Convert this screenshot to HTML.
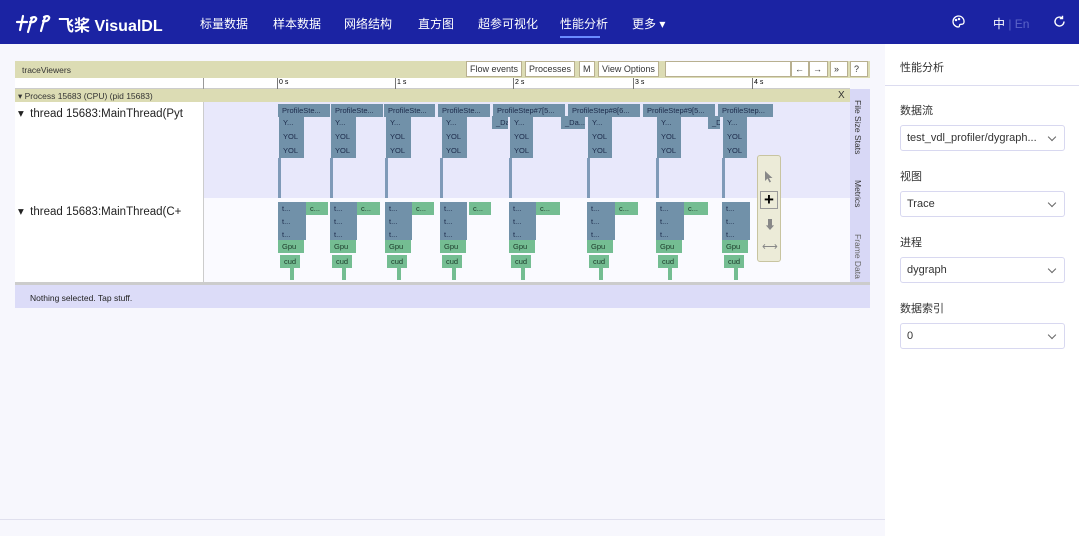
<!DOCTYPE html>
<html><head><meta charset="utf-8"><style>
*{margin:0;padding:0;box-sizing:border-box}
body{width:1079px;height:536px;overflow:hidden;background:#f7f7fd;font-family:"Liberation Sans","Noto Sans CJK SC",sans-serif;position:relative}
.a{position:absolute}
.hd{left:0;top:0;width:1079px;height:44px;background:#1b23a3}
.nav{color:#fff;font-size:12px;top:15px}
.b{position:absolute;background:#7191a9;color:#1c2a4a;font-size:7.5px;line-height:13px;padding-left:4px;overflow:hidden;white-space:nowrap}
.g{position:absolute;background:#74bd92;color:#1c3a2a;font-size:7.5px;line-height:13px;padding-left:4px;overflow:hidden;white-space:nowrap}
.s{position:absolute;background:#7f9ab8;width:3px}
.btn{position:absolute;top:61px;height:16px;background:#fff;border:1px solid #b8b090;font-size:9px;line-height:14px;padding:0 3px;color:#333}
.sel{position:absolute;left:900px;width:165px;height:26px;border:1px solid #d8d8f0;border-radius:3px;background:#fff;font-size:11px;line-height:24px;padding-left:6px;color:#333}
.sel:after{content:"";position:absolute;right:9px;top:8px;width:5px;height:5px;border-right:1px solid #666;border-bottom:1px solid #666;transform:rotate(45deg)}
.lb{position:absolute;left:900px;font-size:11px;color:#333}
</style></head><body>
<div class="a hd"></div>
<svg class="a" style="left:15px;top:10px" width="40" height="24" viewBox="0 0 40 24" fill="none" stroke="#fff" stroke-width="2.2" stroke-linecap="round">
<path d="M2 12H12M8 6L5 20"/><path d="M16 8C20 6 23 8 20 11C18 13 15 12 15 12M17 8L13 22"/><path d="M29 7C33 5 36 7 33 10C31 12 28 11 28 11M30 7L26 21"/></svg>
<div class="a" style="left:58px;top:12px;color:#fff;font-size:16px;font-weight:bold">飞桨 VisualDL</div>
<div class="a nav" style="left:200px">标量数据</div>
<div class="a nav" style="left:273px">样本数据</div>
<div class="a nav" style="left:344px">网络结构</div>
<div class="a nav" style="left:418px">直方图</div>
<div class="a nav" style="left:478px">超参可视化</div>
<div class="a nav" style="left:560px">性能分析</div>
<div class="a" style="left:560px;top:36px;width:40px;height:2px;background:#6a8cff"></div>
<div class="a nav" style="left:632px">更多 ▾</div>
<svg class="a" style="left:952px;top:15px" width="13" height="13" viewBox="0 0 13 13" fill="none" stroke="#fff" stroke-width="1.3"><path d="M6.5 1A5.5 5.5 0 1 0 6.5 12C8 12 7 10 8 9.5C9 9 12 10 12 7A5.5 5.5 0 0 0 6.5 1Z"/><circle cx="4" cy="5" r=".6"/><circle cx="7" cy="4" r=".6"/></svg>
<div class="a nav" style="left:993px">中 <span style="color:#5c64c8">| En</span></div>
<svg class="a" style="left:1053px;top:15px" width="13" height="13" viewBox="0 0 13 13" fill="none" stroke="#fff" stroke-width="1.4"><path d="M11 6.5A4.5 4.5 0 1 1 9 2.8"/><path d="M9.5 0.8V3.5H6.8"/></svg>

<!-- right panel -->
<div class="a" style="left:885px;top:44px;width:194px;height:492px;background:#fff"></div>
<div class="a" style="left:900px;top:59px;font-size:11px;color:#333">性能分析</div>
<div class="a" style="left:885px;top:85px;width:194px;height:1px;background:#dcdcf0"></div>
<div class="lb" style="top:102px">数据流</div><div class="sel" style="top:125px">test_vdl_profiler/dygraph...</div>
<div class="lb" style="top:168px">视图</div><div class="sel" style="top:191px">Trace</div>
<div class="lb" style="top:234px">进程</div><div class="sel" style="top:257px">dygraph</div>
<div class="lb" style="top:300px">数据索引</div><div class="sel" style="top:323px">0</div>
<div class="a" style="left:0;top:519px;width:885px;height:1px;background:#e0e0ee"></div>

<!-- trace viewer -->
<div class="a" style="left:15px;top:61px;width:855px;height:17px;background:#dcdcb4"></div>
<div class="a" style="left:22px;top:65px;font-size:8.5px;color:#333">traceViewers</div>
<div class="btn" style="left:466px">Flow events</div>
<div class="btn" style="left:525px">Processes</div>
<div class="btn" style="left:579px">M</div>
<div class="btn" style="left:598px">View Options</div>
<div class="btn" style="left:665px;width:126px"></div>
<div class="btn" style="left:791px;width:18px">←</div>
<div class="btn" style="left:809px;width:19px">→</div>
<div class="btn" style="left:830px;width:18px">»</div>
<div class="btn" style="left:850px;width:18px">?</div>
<div class="a" style="left:15px;top:78px;width:835px;height:11px;background:#fff;border-bottom:1px solid #ccc"></div>
<div class="a" style="left:203px;top:78px;width:1px;height:11px;background:#999"></div>
<div class="a" style="left:277px;top:78px;width:1px;height:11px;background:#777"></div><div class="a" style="left:279px;top:79px;font-size:7px">0 s</div>
<div class="a" style="left:395px;top:78px;width:1px;height:11px;background:#777"></div><div class="a" style="left:397px;top:79px;font-size:7px">1 s</div>
<div class="a" style="left:513px;top:78px;width:1px;height:11px;background:#777"></div><div class="a" style="left:515px;top:79px;font-size:7px">2 s</div>
<div class="a" style="left:633px;top:78px;width:1px;height:11px;background:#777"></div><div class="a" style="left:635px;top:79px;font-size:7px">3 s</div>
<div class="a" style="left:752px;top:78px;width:1px;height:11px;background:#777"></div><div class="a" style="left:754px;top:79px;font-size:7px">4 s</div>
<div class="a" style="left:15px;top:89px;width:835px;height:13px;background:#dcdcb4"></div>
<div class="a" style="left:18px;top:91px;font-size:8.5px;color:#333">▾ Process 15683 (CPU) (pid 15683)</div>
<div class="a" style="left:838px;top:90px;font-size:10px;color:#333">X</div>
<div class="a" style="left:15px;top:102px;width:188px;height:182px;background:#fff"></div>
<div class="a" style="left:203px;top:102px;width:647px;height:96px;background:#e8e8fb"></div>
<div class="a" style="left:203px;top:198px;width:647px;height:86px;background:#fafaff"></div>
<div class="a" style="left:203px;top:102px;width:1px;height:182px;background:#ccc"></div>
<div class="a" style="left:18px;top:106px;font-size:11.5px;color:#222">▾&nbsp; thread 15683:MainThread(Pyt</div>
<div class="a" style="left:18px;top:204px;font-size:11.5px;color:#222">▾&nbsp; thread 15683:MainThread(C+</div>
<div class="a" style="left:850px;top:89px;width:20px;height:195px;background:#d8d8f6"></div>
<div class="a" style="left:853px;top:100px;font-size:8.5px;color:#333;writing-mode:vertical-rl">File Size Stats</div>
<div class="a" style="left:853px;top:180px;font-size:8.5px;color:#333;writing-mode:vertical-rl">Metrics</div>
<div class="a" style="left:853px;top:234px;font-size:8.5px;color:#666;writing-mode:vertical-rl">Frame Data</div>

<!-- stems -->
<div class="s" style="left:278px;top:158px;height:40px"></div>
<div class="s" style="left:330px;top:158px;height:40px"></div>
<div class="s" style="left:385px;top:158px;height:40px"></div>
<div class="s" style="left:440px;top:158px;height:40px"></div>
<div class="s" style="left:509px;top:158px;height:40px"></div>
<div class="s" style="left:587px;top:158px;height:40px"></div>
<div class="s" style="left:656px;top:158px;height:40px"></div>
<div class="s" style="left:722px;top:158px;height:40px"></div>

<!-- top thread -->
<div class="b" style="left:278px;top:104px;width:52px">ProfileSte...</div>
<div class="b" style="left:331px;top:104px;width:52px">ProfileSte...</div>
<div class="b" style="left:384px;top:104px;width:51px">ProfileSte...</div>
<div class="b" style="left:438px;top:104px;width:52px">ProfileSte...</div>
<div class="b" style="left:493px;top:104px;width:72px">ProfileStep#7[5...</div>
<div class="b" style="left:568px;top:104px;width:72px">ProfileStep#8[6...</div>
<div class="b" style="left:643px;top:104px;width:72px">ProfileStep#9[5...</div>
<div class="b" style="left:718px;top:104px;width:55px">ProfileStep...</div>
<div class="b" style="left:279px;top:116px;width:25px;height:42px;line-height:14px">Y...<br>YOL<br>YOL</div>
<div class="b" style="left:331px;top:116px;width:25px;height:42px;line-height:14px">Y...<br>YOL<br>YOL</div>
<div class="b" style="left:386px;top:116px;width:25px;height:42px;line-height:14px">Y...<br>YOL<br>YOL</div>
<div class="b" style="left:442px;top:116px;width:25px;height:42px;line-height:14px">Y...<br>YOL<br>YOL</div>
<div class="b" style="left:492px;top:116px;width:16px">_Da</div>
<div class="b" style="left:510px;top:116px;width:23px;height:42px;line-height:14px">Y...<br>YOL<br>YOL</div>
<div class="b" style="left:561px;top:116px;width:24px">_Da...</div>
<div class="b" style="left:588px;top:116px;width:24px;height:42px;line-height:14px">Y...<br>YOL<br>YOL</div>
<div class="b" style="left:657px;top:116px;width:24px;height:42px;line-height:14px">Y...<br>YOL<br>YOL</div>
<div class="b" style="left:708px;top:116px;width:12px">_D</div>
<div class="b" style="left:723px;top:116px;width:24px;height:42px;line-height:14px">Y...<br>YOL<br>YOL</div>

<!-- bottom thread -->
<div class="b" style="left:278px;top:202px;width:28px;height:38px;line-height:13px">t...<br>t...<br>t...</div><div class="g" style="left:278px;top:240px;width:26px">Gpu</div><div class="g" style="left:280px;top:255px;width:20px">cud</div><div class="g" style="left:306px;top:202px;width:22px">c...</div>
<div class="b" style="left:330px;top:202px;width:27px;height:38px;line-height:13px">t...<br>t...<br>t...</div><div class="g" style="left:330px;top:240px;width:26px">Gpu</div><div class="g" style="left:332px;top:255px;width:20px">cud</div><div class="g" style="left:357px;top:202px;width:23px">c...</div>
<div class="b" style="left:385px;top:202px;width:27px;height:38px;line-height:13px">t...<br>t...<br>t...</div><div class="g" style="left:385px;top:240px;width:26px">Gpu</div><div class="g" style="left:387px;top:255px;width:20px">cud</div><div class="g" style="left:412px;top:202px;width:22px">c...</div>
<div class="b" style="left:440px;top:202px;width:27px;height:38px;line-height:13px">t...<br>t...<br>t...</div><div class="g" style="left:440px;top:240px;width:26px">Gpu</div><div class="g" style="left:442px;top:255px;width:20px">cud</div><div class="g" style="left:469px;top:202px;width:22px">c...</div>
<div class="b" style="left:509px;top:202px;width:27px;height:38px;line-height:13px">t...<br>t...<br>t...</div><div class="g" style="left:509px;top:240px;width:26px">Gpu</div><div class="g" style="left:511px;top:255px;width:20px">cud</div><div class="g" style="left:536px;top:202px;width:24px">c...</div>
<div class="b" style="left:587px;top:202px;width:28px;height:38px;line-height:13px">t...<br>t...<br>t...</div><div class="g" style="left:587px;top:240px;width:26px">Gpu</div><div class="g" style="left:589px;top:255px;width:20px">cud</div><div class="g" style="left:615px;top:202px;width:23px">c...</div>
<div class="b" style="left:656px;top:202px;width:28px;height:38px;line-height:13px">t...<br>t...<br>t...</div><div class="g" style="left:656px;top:240px;width:26px">Gpu</div><div class="g" style="left:658px;top:255px;width:20px">cud</div><div class="g" style="left:684px;top:202px;width:24px">c...</div>
<div class="b" style="left:722px;top:202px;width:28px;height:38px;line-height:13px">t...<br>t...<br>t...</div><div class="g" style="left:722px;top:240px;width:26px">Gpu</div><div class="g" style="left:724px;top:255px;width:20px">cud</div>
<div class="g" style="left:290px;top:268px;width:4px;height:12px;padding:0"></div>
<div class="g" style="left:342px;top:268px;width:4px;height:12px;padding:0"></div>
<div class="g" style="left:397px;top:268px;width:4px;height:12px;padding:0"></div>
<div class="g" style="left:452px;top:268px;width:4px;height:12px;padding:0"></div>
<div class="g" style="left:521px;top:268px;width:4px;height:12px;padding:0"></div>
<div class="g" style="left:599px;top:268px;width:4px;height:12px;padding:0"></div>
<div class="g" style="left:668px;top:268px;width:4px;height:12px;padding:0"></div>
<div class="g" style="left:734px;top:268px;width:4px;height:12px;padding:0"></div>

<!-- tool palette -->
<div class="a" style="left:757px;top:155px;width:24px;height:107px;background:#ecebd8;border:1px solid #c8c4a0;border-radius:3px"></div>
<svg class="a" style="left:764px;top:170px" width="10" height="13" viewBox="0 0 10 13"><path d="M1 1V11L3.5 8.5L5.5 12.5L7 11.8L5 8H8.5Z" fill="#888"/></svg>
<div class="a" style="left:760px;top:191px;width:18px;height:18px;border:1px solid #999;font-size:17px;line-height:15px;text-align:center;font-weight:bold">+</div>
<div class="a" style="left:764px;top:216px;font-size:12px;color:#888">⬇</div>
<div class="a" style="left:762px;top:240px;font-size:11px;color:#888">⟷</div>

<!-- status -->
<div class="a" style="left:15px;top:282px;width:855px;height:3px;background:#ccc"></div>
<div class="a" style="left:15px;top:285px;width:855px;height:23px;background:#dcdcf8"></div>
<div class="a" style="left:30px;top:293px;font-size:8.5px;color:#222">Nothing selected. Tap stuff.</div>
</body></html>
